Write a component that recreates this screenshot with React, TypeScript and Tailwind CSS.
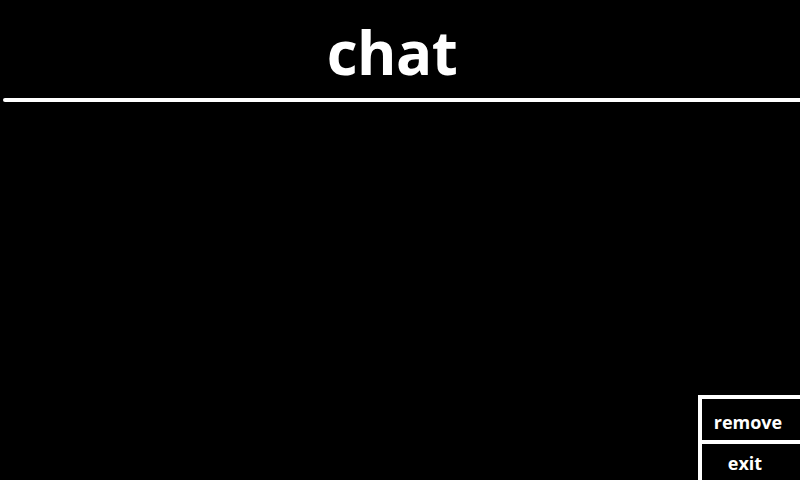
export default function App() {
  return (
    <div
      className="w-[800px] h-[480px] bg-black text-white flex flex-col overflow-hidden"
      style={{ fontFamily: '"Open Sans", "DejaVu Sans", sans-serif' }}
    >
      {/* Title */}
      <header className="h-[98px] flex items-start justify-center pr-[16px]">
        <h1 className="text-[60px] font-bold leading-none mt-[22px] tracking-[-0.5px]">chat</h1>
      </header>
      <div className="ml-[3px] h-[4px] bg-white rounded-l-full" />

      {/* Body */}
      <main className="flex-1 flex items-end justify-end">
        <div className="flex flex-col w-[102px]">
          <button
            type="button"
            className="h-[45px] border-l-4 border-t-4 border-white text-[18px] font-bold pr-[6px] pt-[6px]"
          >
            remove
          </button>
          <button
            type="button"
            className="h-[40px] border-l-4 border-t-4 border-white text-[18px] font-bold pr-[12px] pt-[2px]"
          >
            exit
          </button>
        </div>
      </main>
    </div>
  );
}
